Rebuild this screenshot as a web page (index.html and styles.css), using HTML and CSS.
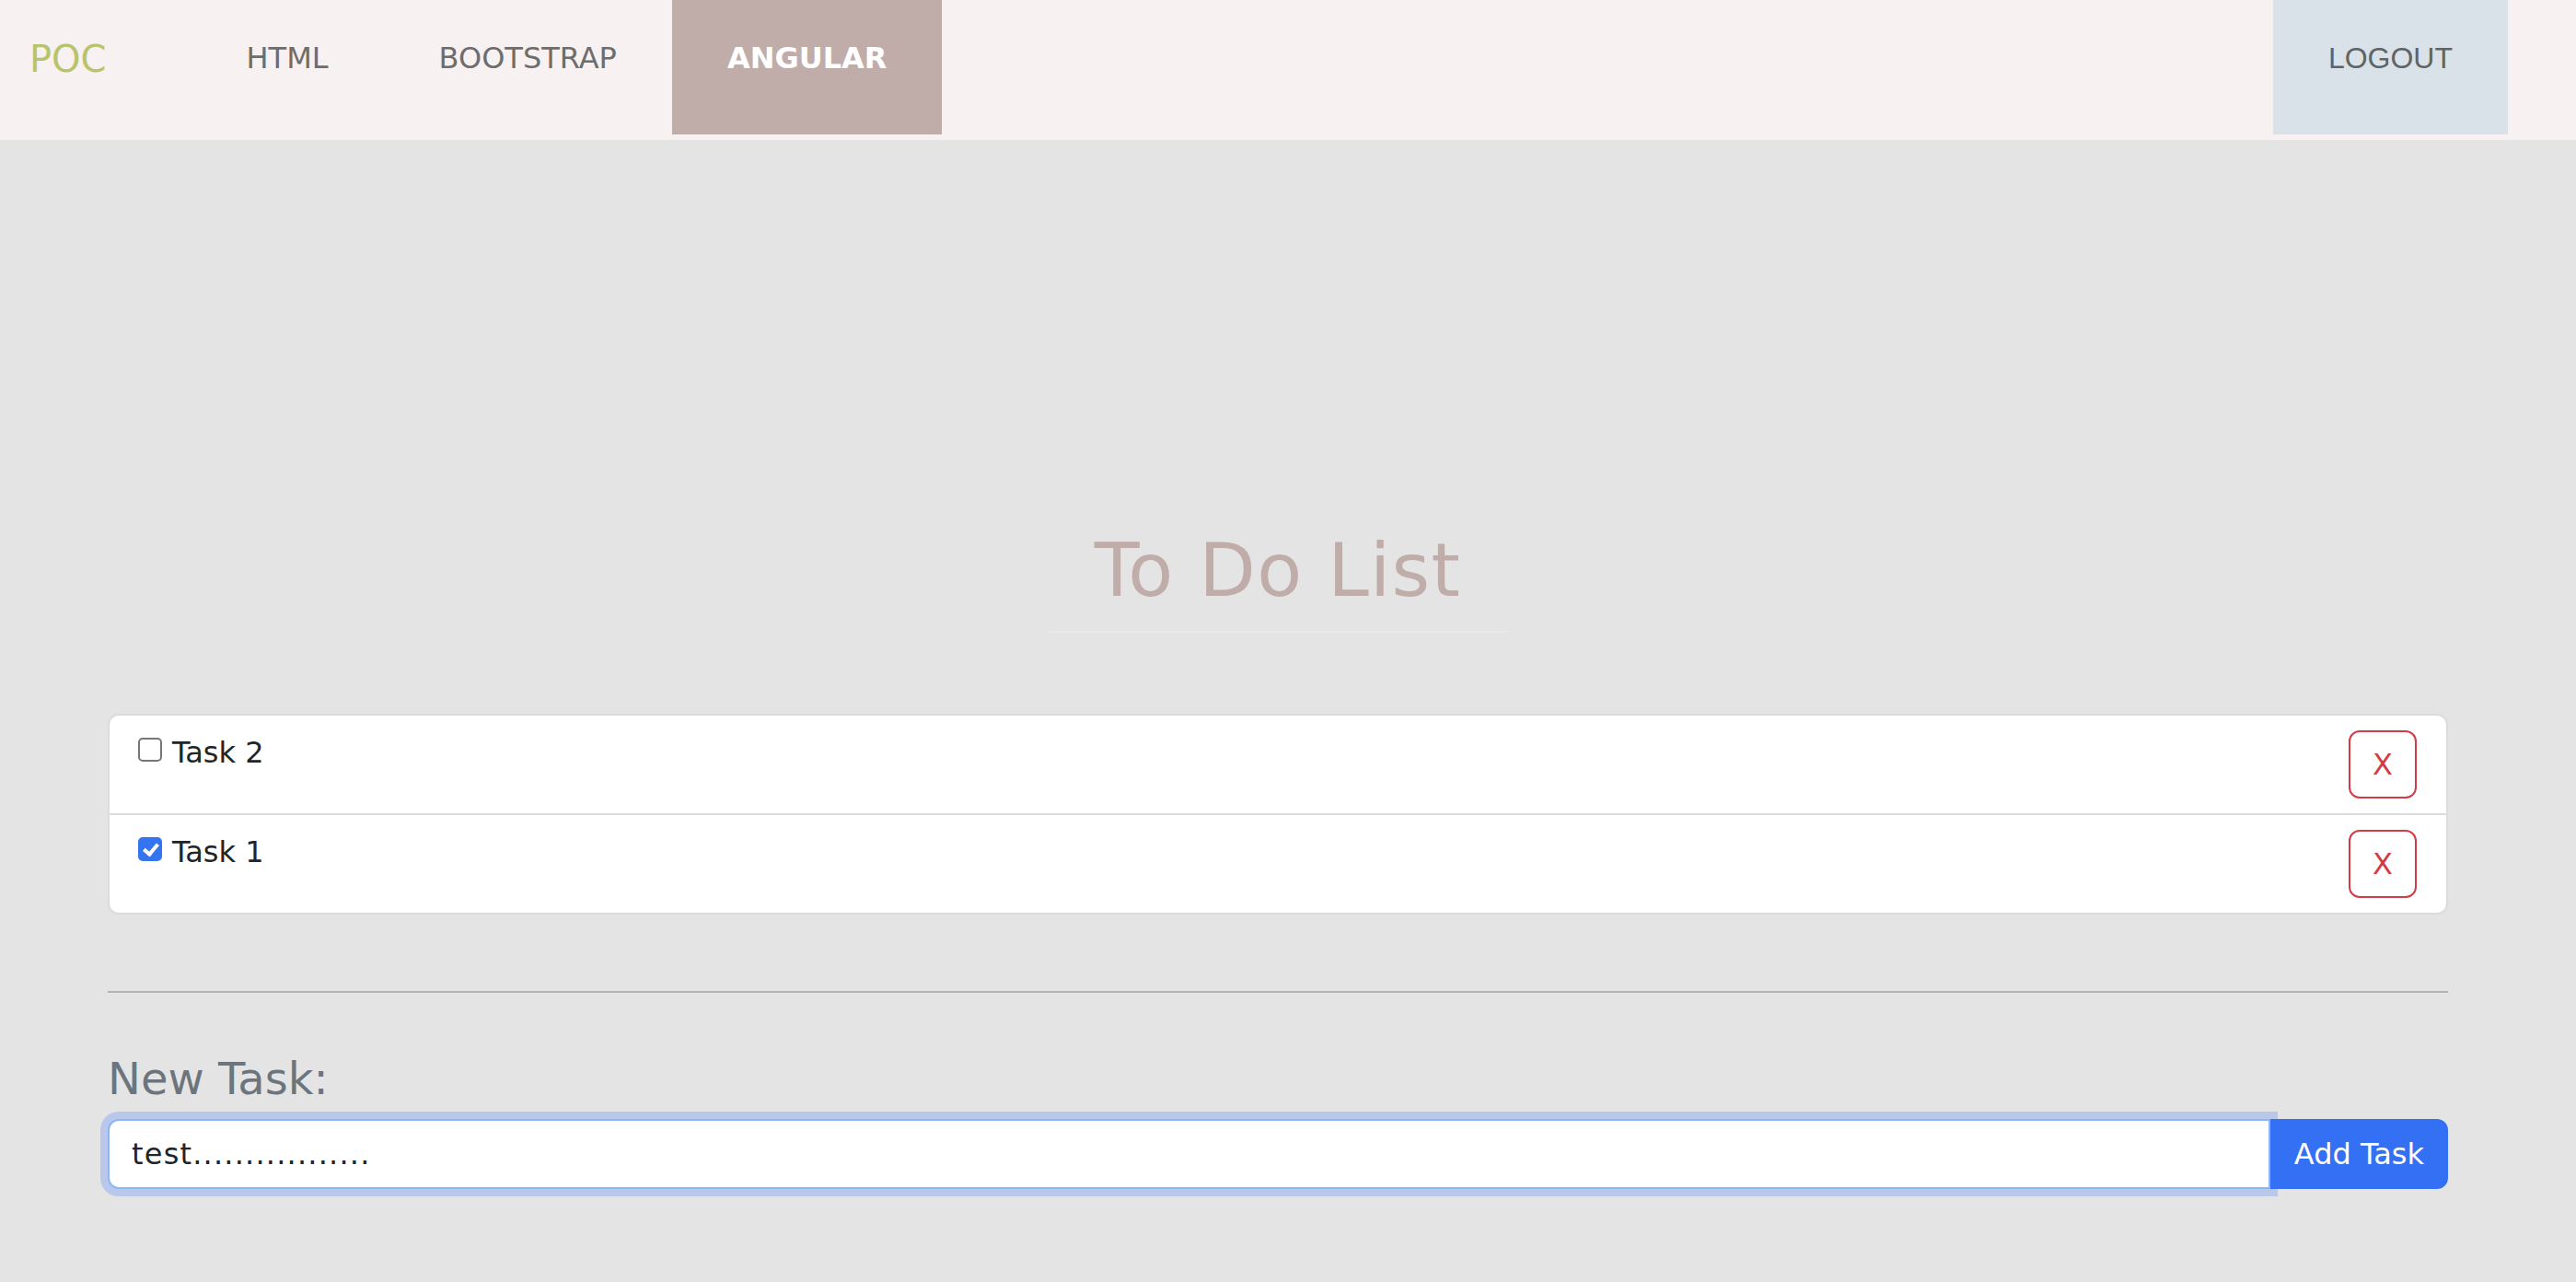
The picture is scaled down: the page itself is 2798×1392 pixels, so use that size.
FILE: index.html
```html
<!DOCTYPE html>
<html lang="en">
<head>
<meta charset="utf-8">
<title>To Do List</title>
<link rel="stylesheet" href="styles.css">
</head>
<body>
<nav class="navbar">
  <a class="brand" href="#">POC</a>
  <a class="nav-link" href="#">HTML</a>
  <a class="nav-link" href="#">BOOTSTRAP</a>
  <a class="nav-link active" href="#">ANGULAR</a>
  <a class="logout" href="#">LOGOUT</a>
</nav>
<main class="container">
  <h1 class="title">To Do List</h1>
  <ul class="task-list">
    <li class="task">
      <label class="task-label"><input type="checkbox" class="check"> Task 2</label>
      <button class="btn-remove">X</button>
    </li>
    <li class="task">
      <label class="task-label"><input type="checkbox" class="check" checked> Task 1</label>
      <button class="btn-remove">X</button>
    </li>
  </ul>
  <hr class="divider">
  <h3 class="new-label">New Task:</h3>
  <div class="input-group">
    <input class="task-input" type="text" value="test.................">
    <button class="btn-add">Add Task</button>
  </div>
</main>
</body>
</html>
```
FILE: styles.css
```css
html {
  background: #e4e4e4;
}
body {
  margin: 0;
  min-height: 1392px;
  background: #e4e4e4;
  font-family: "DejaVu Sans", Verdana, sans-serif;
  color: #212529;
}
a {
  text-decoration: none;
}
.navbar {
  display: flex;
  align-items: flex-start;
  height: 152px;
  background: #f7f1f1;
}
.brand {
  margin: 40px 92px 0 32px;
  font-size: 40px;
  line-height: 48px;
  color: #b8c46b;
}
.nav-link {
  box-sizing: border-box;
  height: 146px;
  padding: 39px 60px 0;
  font-size: 32px;
  line-height: 48px;
  color: #6d6d6d;
}
.nav-link.active {
  background: #c0adaa;
  color: #ffffff;
  font-weight: bold;
}
.logout {
  box-sizing: border-box;
  height: 146px;
  margin: 0 74px 0 auto;
  padding: 39px 60px 0;
  background: #d8e2e8;
  font-family: "Liberation Sans", Arial, sans-serif;
  font-size: 32px;
  line-height: 48px;
  color: #5f6467;
}
.container {
  width: 2542px;
  margin-left: 117px;
  padding-top: 420px;
}
.title {
  width: 500px;
  margin: 0 auto;
  padding-bottom: 17px;
  border-bottom: 2px solid #e9e9e9;
  text-align: center;
  font-size: 80px;
  line-height: 96px;
  font-weight: normal;
  letter-spacing: 1.3px;
  color: #c0adaa;
}
.task-list {
  list-style: none;
  margin: 88px 0 0;
  padding: 0;
  background: #ffffff;
  border: 2px solid #dcdcdc;
  border-radius: 12px;
}
.task {
  display: flex;
  justify-content: space-between;
  align-items: flex-start;
  padding: 16px 32px 16px 31px;
}
.task + .task {
  border-top: 2px solid #dcdcdc;
}
.task-label {
  display: flex;
  align-items: flex-start;
  font-size: 32px;
  line-height: 48px;
  color: #212529;
}
.check {
  appearance: none;
  -webkit-appearance: none;
  position: relative;
  box-sizing: border-box;
  width: 26px;
  height: 26px;
  margin: 8px 11px 0 0;
  border: 2px solid #767676;
  border-radius: 5px;
  background: #ffffff;
}
.check:checked {
  background: #3574f0;
  border-color: #3574f0;
}
.check:checked::after {
  content: "";
  position: absolute;
  left: 7px;
  top: 2px;
  width: 6px;
  height: 12px;
  border-right: 4px solid #ffffff;
  border-bottom: 4px solid #ffffff;
  transform: rotate(40deg);
}
.btn-remove {
  box-sizing: border-box;
  height: 74px;
  padding: 11px 24px;
  border: 2px solid #d13d47;
  border-radius: 12px;
  background: #ffffff;
  color: #d13d47;
  font-family: "DejaVu Sans", Verdana, sans-serif;
  font-size: 32px;
  line-height: 48px;
}
.divider {
  margin: 83px 0 0;
  border: 0;
  border-top: 2px solid #b3b3b3;
}
.new-label {
  margin: 64px 0 15px;
  font-size: 48px;
  line-height: 58px;
  font-weight: normal;
  color: #6c757d;
}
.input-group {
  display: flex;
  height: 76px;
}
.task-input {
  flex: 1;
  box-sizing: border-box;
  height: 76px;
  margin: 0;
  padding: 0 24px;
  border: 2px solid #8db6f6;
  border-radius: 12px 0 0 12px;
  outline: none;
  box-shadow: 0 0 0 8px #b8c7ea;
  font-family: "DejaVu Sans", Verdana, sans-serif;
  font-size: 32px;
  letter-spacing: 1.2px;
  color: #212529;
  background: #ffffff;
}
.btn-add {
  position: relative;
  box-sizing: border-box;
  height: 76px;
  margin: 0;
  padding: 0 24px;
  border: 2px solid #3470f4;
  border-radius: 0 12px 12px 0;
  background: #3470f4;
  color: #ffffff;
  font-family: "DejaVu Sans", Verdana, sans-serif;
  font-size: 32px;
  line-height: 48px;
}
```
